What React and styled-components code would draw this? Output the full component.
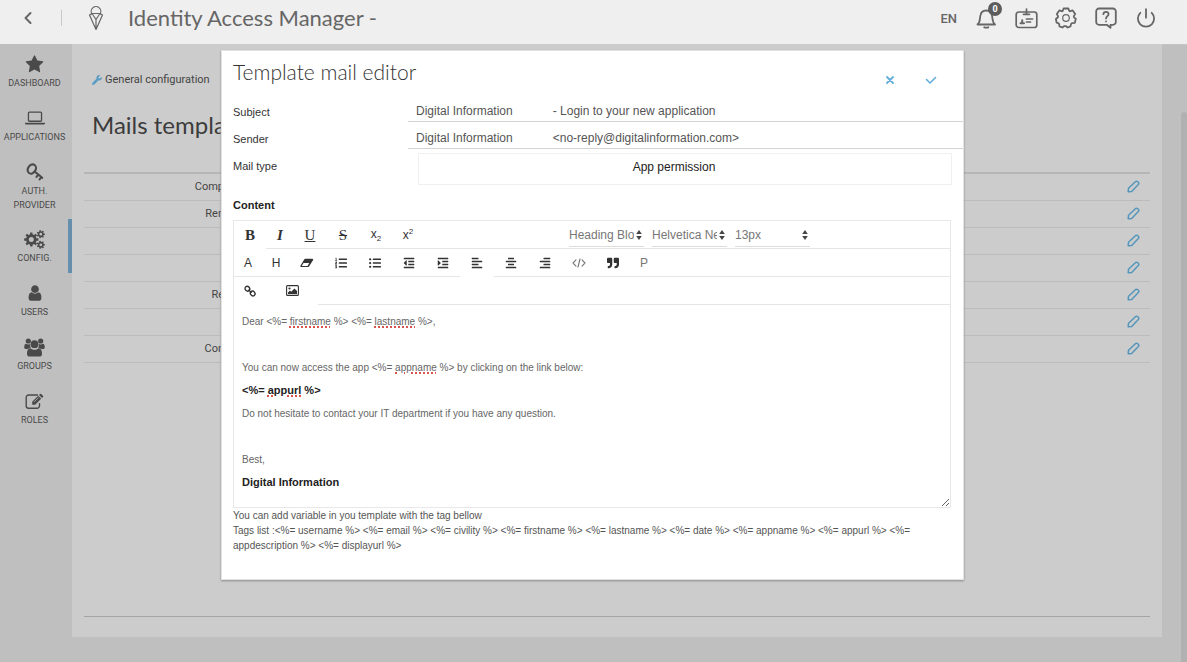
import React from "react";
import styled, { createGlobalStyle } from "styled-components";
import {
  FaListOl, FaListUl, FaOutdent, FaIndent, FaAlignLeft,
  FaAlignCenter, FaAlignRight, FaQuoteRight, FaWrench,
} from "react-icons/fa";

const sans = `"Liberation Sans", Arial, sans-serif`;
const roboto = `Roboto, "Liberation Sans", sans-serif`;
const display = `Lato, "Liberation Sans", sans-serif`;

const Global = createGlobalStyle`
  * { box-sizing: border-box; }
  body { margin: 0; background: #bfbfbf; font-family: ${roboto}; color: #444; }
  button, input, select { font: inherit; color: inherit; }
  button { border: 0; padding: 0; background: none; cursor: pointer; }
  svg { display: block; flex: none; }
`;

const Page = styled.div`
  min-height: 100vh;
  display: flex;
  flex-direction: column;
`;
const Header = styled.header`
  height: 44px;
  padding: 0 29px 8px 16px;
  background: #efefef;
  box-shadow: 0 1px 1px #c4c4c4;
  display: flex;
  align-items: center;
  color: #666;
`;
const IconButton = styled.button`
  position: relative;
  width: 24px;
  height: 28px;
  display: flex;
  align-items: center;
  justify-content: center;
`;
const Divider = styled.span`
  width: 1px;
  height: 16px;
  margin: 0 22px 0 21px;
  background: #c8c8c8;
`;
const AppTitle = styled.h1`
  margin: 0 auto 0 20px;
  font: 400 22px/28px ${display};
  color: #666;
`;
const Lang = styled.button`
  margin-right: 17px;
  font-size: 13px;
  font-weight: 500;
`;
const HeaderTools = styled.div`
  display: flex;
  gap: 16px;
`;
const Count = styled.span`
  position: absolute;
  top: -2px;
  right: -4px;
  width: 14px;
  height: 14px;
  border-radius: 50%;
  background: #5c5c5c;
  color: #fff;
  font: 700 9px/14px ${roboto};
  text-align: center;
`;

const Body = styled.div`
  position: relative;
  flex: 1;
  display: flex;
`;
const Sidebar = styled.nav`
  width: 72px;
  flex: none;
  background: #bfbfbf;
`;
const NavItem = styled.a`
  display: flex;
  flex-direction: column;
  align-items: center;
  min-height: 54px;
  padding: 8px 0 7px 1px;
  border-right: 4px solid ${(p) => (p.$active ? "#668fad" : "transparent")};
  color: #4a4a4a;
  text-decoration: none;
  text-align: center;
  font-size: 9px;
  line-height: 14px;
`;
const NavIcon = styled.span`
  height: 24px;
  display: flex;
  align-items: center;
`;
const Main = styled.main`
  flex: 1;
  margin: 0 25px 25px 0;
  padding: 28px 12px 20px;
  background: #ccc;
  display: flex;
  flex-direction: column;
`;
const Crumb = styled.a`
  display: flex;
  align-items: center;
  gap: 3px;
  padding-left: 8px;
  font-size: 11px;
  line-height: 16px;
  color: #444;
  text-decoration: none;
  svg { color: #5a9cc4; }
`;
const PageTitle = styled.h2`
  margin: 20px 0 30px 8px;
  white-space: nowrap;
  font: 400 24px/34px ${display};
  color: #3c3c3c;
`;
const MailTable = styled.table`
  width: 100%;
  border-collapse: collapse;
  border-top: 2px solid #b6b6b6;
  td { height: 27px; padding: 0; border-bottom: 1px solid #bcbcbc; }
`;
const NameCell = styled.td`
  width: 140px;
  text-align: right;
  font-size: 11px;
`;
const EditButton = styled.button`
  display: block;
  margin: 0 10px 0 auto;
  color: #5496bb;
`;
const PageRule = styled.hr`
  width: 100%;
  margin: auto 0 0;
  border: 0;
  border-top: 1px solid #a4a4a4;
`;
const ScrollThumb = styled.div`
  position: absolute;
  top: 68px;
  right: 0;
  bottom: 0;
  width: 6px;
  border-radius: 3px 3px 0 0;
  background: #b1b1b1;
`;

const Overlay = styled.div`
  position: absolute;
  inset: 0;
  padding-top: 6px;
  display: flex;
  justify-content: center;
  align-items: flex-start;
  pointer-events: none;
`;
const Modal = styled.section`
  width: 63%;
  max-width: 743px;
  margin-right: 2px;
  min-height: 530px;
  padding: 7px 0 22px 11px;
  background: #fff;
  border: 1px solid #e2e2e2;
  box-shadow: 0 1px 2px #8c8c8c;
  pointer-events: auto;
  font: 400 11px/16px ${sans};
  color: #444;
`;
const ModalHead = styled.div`
  display: flex;
  justify-content: space-between;
  height: 43px;
  padding-right: 26px;
`;
const ModalTitle = styled.h2`
  margin: 0;
  font: 300 21px/28px ${display};
  color: #333;
`;
const Actions = styled.div`
  display: flex;
  gap: 30px;
  padding-top: 8px;
  button { width: 12px; height: 28px; color: #62addb; }
`;
const Field = styled.div`
  display: grid;
  grid-template-columns: 175px 1fr;
  align-items: start;
  height: ${(p) => (p.$tall ? 34 : 27)}px;
  label { padding-top: 3px; color: #333; }
`;
const LineInput = styled.input`
  width: 100%;
  height: 21px;
  padding: 0 8px;
  border: 0;
  border-bottom: 1px solid #d4d4d4;
  background: none;
  outline: 0;
  font-size: 12px;
  color: #555;
`;
const TypeSelect = styled.select`
  appearance: none;
  height: 32px;
  margin: -2px 11px 0 10px;
  padding: 0 30px 5px 8px;
  border: 1px solid #f0f0f0;
  background: #fff;
  color: #222;
  font-size: 12px;
  text-align-last: center;
`;
const ContentLabel = styled.h3`
  margin: 8px 0 7px;
  font: 700 11px/16px ${sans};
  color: #222;
`;
const Editor = styled.div`
  margin-right: 12px;
  border: 1px solid #e8e8e8;
`;
const ToolRow = styled.div`
  display: flex;
  height: 28px;
`;
const Tool = styled.button`
  width: ${(p) => p.$w || 34}px;
  height: 28px;
  display: flex;
  align-items: center;
  justify-content: center;
  border-bottom: 1px solid ${(p) => (p.$plain ? "transparent" : "#e6e6e6")};
  color: ${(p) => (p.$soft ? "#777" : "#333")};
  font-family: ${(p) => (p.$serif ? `"Liberation Serif", serif` : sans)};
  font-size: ${(p) => (p.$serif ? 15 : 12)}px;
  sub, sup { font-size: 8px; line-height: 8px; }
`;
const ToolFill = styled.div`
  flex: 1;
  display: flex;
  gap: 8px;
  padding-left: ${(p) => p.$indent || 0}px;
  border-bottom: 1px solid #e6e6e6;
`;
const Picker = styled.span`
  position: relative;
  width: 75px;
  height: 26px;
  border-bottom: 1px solid #ddd;
  select {
    appearance: none;
    width: 65px;
    height: 26px;
    padding: 1px 0 0;
    border: 0;
    background: none;
    outline: 0;
    overflow: hidden;
    font-size: 12px;
    color: #777;
  }
  svg { position: absolute; right: 2px; top: 9px; }
`;
const Text = styled.div`
  height: 202px;
  padding: 5px 8px;
  overflow: hidden;
  resize: vertical;
  outline: 0;
  color: #666;
  font-size: 10px;
  line-height: 23px;
  p { margin: 0; min-height: 23px; }
  strong { color: #222; font-size: 11px; }
`;
const Misspelt = styled.span`
  text-decoration: underline dotted #d9534f 2px;
  text-underline-offset: 1px;
`;
const Help = styled.p`
  margin: 0 12px 0 0;
  padding-right: 30px;
  font-size: 10px;
  line-height: 15px;
  color: #555;
`;

const gear = (cx, cy, r, teeth, hole) => {
  const pts = [];
  for (let i = 0; i < teeth; i++) {
    const step = (Math.PI * 2) / teeth;
    [[-0.3, 0.74], [-0.2, 1], [0.2, 1], [0.3, 0.74]].forEach(([o, k]) => {
      const a = (i + o) * step;
      pts.push(`${(cx + Math.cos(a) * r * k).toFixed(2)} ${(cy + Math.sin(a) * r * k).toFixed(2)}`);
    });
  }
  return `M${pts.join("L")}ZM${cx - hole} ${cy}a${hole} ${hole} 0 1 0 ${hole * 2} 0a${hole} ${hole} 0 1 0 ${-hole * 2} 0Z`;
};

const Line = ({ w = 20, h = w, box = "0 0 20 20", sw = 1.5, children }) => (
  <svg width={w} height={h} viewBox={box} fill="none" stroke="currentColor"
    strokeWidth={sw} strokeLinecap="round" strokeLinejoin="round" aria-hidden="true">{children}</svg>
);
const Solid = ({ w = 20, h = w, box = "0 0 20 20", children }) => (
  <svg width={w} height={h} viewBox={box} fill="currentColor" fillRule="evenodd" aria-hidden="true">{children}</svg>
);

const Star = () => (
  <Solid w={19} box="0 0 1792 1792"><path d="M1728 647q0 22-26 48l-363 354 86 500q1 7 1 20 0 21-10.5 35.5t-30.5 14.5q-19 0-40-12l-449-236-449 236q-22 12-40 12-21 0-31.5-14.5t-10.5-35.5q0-6 2-20l86-500-364-354q-25-27-25-48 0-37 56-46l502-73 225-455q19-41 49-41t49 41l225 455 502 73q56 9 56 46z" /></Solid>
);
const Laptop = () => (
  <Solid w={20} h={14} box="0 0 20 14"><path d="M4.5 0.5h11a1.7 1.7 0 0 1 1.7 1.7v7a1.7 1.7 0 0 1-1.7 1.7h-11a1.7 1.7 0 0 1-1.7-1.7v-7A1.7 1.7 0 0 1 4.5 .5zM4.600 1.800a.5.5 0 0 0-.5.5v6.800a.5.5 0 0 0 .5.5h10.800a.5.5 0 0 0 .5-.5V2.300a.5.5 0 0 0-.5-.5zM0 11.800h20v.8c0 .6-.7 1-1.700 1H1.700c-1 0-1.700-.4-1.700-1z" /></Solid>
);
const Key = () => (
  <Line w={18} box="0 0 18 18" sw={2.1}><ellipse cx="5.800" cy="6" rx="3.800" ry="4.900" transform="rotate(35 5.800 6)" /><path d="M9 8.800l7.200 6M12.300 11.800l-1.800 2.100M15.400 14.200l-1.800 2.200" /></Line>
);
const Cogs = () => (
  <Solid w={21} h={19} box="0 0 21 19"><path d={gear(7.3, 9.5, 7.2, 8, 2.5)} /><path d={gear(16.8, 4.2, 4.1, 7, 1.4)} /><path d={gear(16.8, 14.8, 4.1, 7, 1.4)} /></Solid>
);
const User = () => (
  <Solid w={18} box="0 0 1792 1792"><path d="M1536 1399q0 109-62.500 187t-150.500 78h-854q-88 0-150.500-78t-62.500-187q0-85 8.500-160.500t31.500-152 58.500-131 94-89 134.500-34.500q131 128 313 128t313-128q76 0 134.500 34.500t94 89 58.500 131 31.500 152 8.500 160.500zm-256-887q0 159-112.500 271.500t-271.500 112.500-271.500-112.500-112.500-271.500 112.500-271.500 271.500-112.500 271.500 112.500 112.500 271.500z" /></Solid>
);
const Users = () => (
  <Solid w={21} h={19} box="0 0 21 19"><circle cx="4.300" cy="3" r="2.600" /><circle cx="16.700" cy="3" r="2.600" /><circle cx="10.500" cy="6.200" r="3.900" /><path d="M2.200 5.800c1.300 1 2.800 1 4 .3-.4 1.500 0 2.700.7 3.600-1.200 0-2.200.5-2.900 1.400H2C.8 11.100.2 10.400.2 9.300c0-1.800.6-3.500 2-3.500zM18.800 5.800c-1.300 1-2.800 1-4 .3.4 1.500 0 2.700-.7 3.600 1.200 0 2.200.5 2.900 1.400h2c1.200 0 1.800-.7 1.800-1.800 0-1.800-.6-3.500-2-3.500zM6.500 10.300c2.400 2 5.600 2 8 0 2.600 0 3.500 2.500 3.500 5.400 0 1.900-1 2.900-2.700 2.900H5.700c-1.700 0-2.700-1-2.700-2.900 0-2.900.9-5.400 3.500-5.400z" /></Solid>
);
const Roles = () => (
  <svg width="19" height="17" viewBox="0 0 19 17" fill="none" aria-hidden="true">
    <path d="M12.500 2H3.700A2.500 2.500 0 0 0 1.200 4.500v8.300a2.500 2.500 0 0 0 2.500 2.500H12a2.500 2.500 0 0 0 2.500-2.500v-2" stroke="currentColor" strokeWidth="1.400" strokeLinecap="round" />
    <path d="M7.200 8.800l6-6 3 3-6 6h-3zM14 2l1-1q.6-.6 1.200 0L18 2.800q.5.600 0 1.200l-1 1z" fill="currentColor" />
    <path d="M9 9l4.500-4.500" stroke="#bfbfbf" strokeWidth=".7" />
  </svg>
);
const Pencil = () => (
  <Line w={13} box="0 0 13 13" sw={1.5}><path d="M1.200 11.800l.3-3.500L8.400 1.700q1.200-1 2.300 0l.6.6q1 1.100 0 2.300L4.700 11.500z" /></Line>
);

const Bell = () => <Line w={21} h={22} box="0 0 21 22" sw={1.8}><path d="M1.500 17.500h17.500c-2.600-2-2.400-4.500-2.800-8-.4-3.800-2.200-6-6-6s-5.600 2.200-6 6c-.4 3.500-.1 6-2.700 8zM8.300 20.300q2 .8 4 0" /></Line>;
const Badge = () => <Line w={23} h={21} box="0 0 23 21" sw={1.7}><rect x="1.200" y="4" width="20.600" height="15.500" rx="2.500" /><path d="M11.500 1v5.500M8.500 6.300h6M11.500 11h6M11.500 14h4" /><path d="M5.500 15.300h3.500M7.200 12.200v2" strokeWidth="2" /></Line>;
const Settings = () => <Line w={22} box="0 0 22 22" sw={1.8}><path d="M8.600 1.500h4.800l.8 2.300q.4.600 1.100.4l2.400-.8 2.500 3.500-1.300 2.200q-.3 1 .3 1.500l1.600 1.200-1 4-2.700.3q-.8.100-1 .8l-.6 2.500-2.800 1.100-1.700-1.300h-2L7.300 20.500 4.500 19.400l-.4-2.500q-.2-.700-1-.8L1.600 15.600.9 12l1.800-1.500q.5-.6.2-1.500L1.800 6.900l2.500-3.500 2.400.8q.7.200 1.100-.4z" /><circle cx="11" cy="11" r="3.300" strokeWidth="1.200" /></Line>;
const HelpIcon = () => <Line w={22} box="0 0 22 22" sw={1.8}><path d="M4 1.500h14a2.800 2.800 0 0 1 2.800 2.800v10.700a2.800 2.800 0 0 1-2.800 2.800h-2.500V20.800l-3.800-3H4a2.800 2.800 0 0 1-2.800-2.800V4.300A2.800 2.800 0 0 1 4 1.500z" /><path d="M8.400 7.200c.2-3.400 5.400-3 5.200.1-.1 1.700-2.600 2-2.600 4.200M11 14.300v.1" /></Line>;
const Power = () => <Line w={20} box="0 0 20 20" sw={1.8}><path d="M10 1.200v8.500M4.300 4.800a8.100 8.100 0 1 0 11.400 0" /></Line>;

const SortArrows = () => <Solid w={6} h={10} box="0 0 6 10"><path d="M3 0l2.800 4H.2zM3 10L.2 6h5.600z" /></Solid>;
const LinkIcon = () => <Line w={12} box="0 0 12 12" sw={1.4}><ellipse cx="3.400" cy="3.700" rx="2.200" ry="2.500" transform="rotate(-40 3.400 3.700)" /><ellipse cx="8.700" cy="8.500" rx="2.200" ry="2.500" transform="rotate(-40 8.700 8.500)" /><path d="M4.800 5.200l2.400 2" /></Line>;
const Eraser = () => <Solid w={14} h={10} box="0 0 14 10"><path d="M5.300.8h7.200q1 .2.600 1.200L9.200 8.300q-.4.600-1.200.7H.9Q0 8.700.4 7.800L4.200 1.400q.4-.6 1.100-.6zM1.700 8h5.800L9.300 5.100H3.500z" /></Solid>;
const Code = () => <Line w={14} h={10} box="0 0 14 10" sw={1.1}><path d="M4 1.800L1 5l3 3.200M10 1.800L13 5l-3 3.200M8 1L6 9" /></Line>;
const Picture = () => <svg width="13" height="11" viewBox="0 0 13 11" aria-hidden="true"><rect x=".6" y=".6" width="11.800" height="9.800" rx="1" fill="none" stroke="#333" strokeWidth="1.100" /><circle cx="3.500" cy="3.500" r="1.100" fill="#333" /><path d="M2 9V7.500l2-2 1.200 1.200L8.500 3.500 11 6v3z" fill="#333" /></svg>;

const NAV = [
  ["DASHBOARD", Star], ["APPLICATIONS", Laptop], ["AUTH. PROVIDER", Key], ["CONFIG.", Cogs],
  ["USERS", User], ["GROUPS", Users], ["ROLES", Roles],
];
const ROWS = ["Comp", "Ren", "", "", "Re", "", "Con"];
const HEADER_TOOLS = [["Badge", Badge], ["Settings", Settings], ["Help", HelpIcon], ["Log out", Power]];
const BLOCKS = [
  ["Numbered list", FaListOl], ["Bulleted list", FaListUl], ["Outdent", FaOutdent], ["Indent", FaIndent],
  ["Align left", FaAlignLeft], ["Align center", FaAlignCenter], ["Align right", FaAlignRight],
  ["Code", Code], ["Quote", FaQuoteRight],
];
const gap = "\u00a0".repeat(12);

function Pick({ label, value }) {
  return (
    <Picker>
      <select aria-label={label}><option>{value}</option></select>
      <SortArrows />
    </Picker>
  );
}

export default function App() {
  return (
    <Page>
      <Global />
      <Header>
        <IconButton aria-label="Back"><Line w={12} h={14} box="0 0 12 14" sw={2}><path d="M8.500 2L3.500 7l5 5" /></Line></IconButton>
        <Divider />
        <Line w={24} h={26} box="0 0 24 26" sw={1.2}><path d="M8.200 9.300A4.800 4.800 0 1 1 15.800 9.300M8 8.500h8l2.500 1.500L12 24.500 5.500 10zM9 10l3 4.500L15 10M12 14.500V24" /></Line>
        <AppTitle>Identity Access Manager -</AppTitle>
        <Lang>EN</Lang>
        <HeaderTools>
          <IconButton aria-label="Notifications"><Bell /><Count>0</Count></IconButton>
          {HEADER_TOOLS.map(([name, Icon]) => <IconButton key={name} aria-label={name}><Icon /></IconButton>)}
        </HeaderTools>
      </Header>
      <Body>
        <Sidebar>
          {NAV.map(([name, Icon]) => (
            <NavItem key={name} href="#" $active={name === "CONFIG."}><NavIcon><Icon /></NavIcon>{name}</NavItem>
          ))}
        </Sidebar>
        <Main>
          <Crumb href="#"><FaWrench size={10} />General configuration</Crumb>
          <PageTitle>Mails templa</PageTitle>
          <MailTable>
            <tbody>
              {ROWS.map((name, i) => (
                <tr key={i}>
                  <NameCell>{name}</NameCell>
                  <td><EditButton aria-label="Edit"><Pencil /></EditButton></td>
                </tr>
              ))}
            </tbody>
          </MailTable>
          <PageRule />
        </Main>
        <ScrollThumb />
        <Overlay>
          <Modal role="dialog" aria-labelledby="editor-title">
            <ModalHead>
              <ModalTitle id="editor-title">Template mail editor</ModalTitle>
              <Actions>
                <button aria-label="Cancel"><Line w={12} h={10} box="0 0 12 10" sw={1.8}><path d="M4 2l6 6M10 2L4 8" /></Line></button>
                <button aria-label="Save"><Line w={12} h={10} box="0 0 12 10" sw={1.6}><path d="M1.500 4.500L5 8l5.500-5.500" /></Line></button>
              </Actions>
            </ModalHead>
            <Field><label htmlFor="subject">Subject</label><LineInput id="subject" defaultValue={`Digital Information${gap}- Login to your new application`} /></Field>
            <Field><label htmlFor="sender">Sender</label><LineInput id="sender" defaultValue={`Digital Information${gap}<no-reply@digitalinformation.com>`} /></Field>
            <Field $tall><label htmlFor="type">Mail type</label><TypeSelect id="type"><option>App permission</option></TypeSelect></Field>
            <ContentLabel>Content</ContentLabel>
            <Editor>
              <ToolRow>
                <Tool $w={32} $serif $plain><b>B</b></Tool>
                <Tool $w={28} $serif><b><i>I</i></b></Tool>
                <Tool $w={32} $serif><u>U</u></Tool>
                <Tool $w={34} $serif><s>S</s></Tool>
                <Tool $w={32}><span>x<sub>2</sub></span></Tool>
                <Tool $w={32}><span>x<sup>2</sup></span></Tool>
                <ToolFill $indent={145}>
                  <Pick label="Block style" value="Heading Block" />
                  <Pick label="Font" value="Helvetica Neue" />
                  <Pick label="Font size" value="13px" />
                </ToolFill>
              </ToolRow>
              <ToolRow>
                <Tool $w={28}>A</Tool>
                <Tool $w={28}>H</Tool>
                <Tool aria-label="Clear formatting"><Eraser /></Tool>
                {BLOCKS.map(([name, Icon]) => (
                  <Tool key={name} aria-label={name} $plain={name === "Align left"} $soft={name === "Code"}><Icon size={12} /></Tool>
                ))}
                <Tool $w={28} $soft>P</Tool>
                <ToolFill />
              </ToolRow>
              <ToolRow>
                <Tool $w={32} $plain aria-label="Link"><LinkIcon /></Tool>
                <Tool $w={52} $plain aria-label="Image"><Picture /></Tool>
                <ToolFill />
              </ToolRow>
              <Text contentEditable suppressContentEditableWarning spellCheck={false} role="textbox" aria-label="Content">
                <p>Dear &lt;%= <Misspelt>firstname</Misspelt> %&gt; &lt;%= <Misspelt>lastname</Misspelt> %&gt;,</p>
                <p />
                <p>You can now access the app &lt;%= <Misspelt>appname</Misspelt> %&gt; by clicking on the link below:</p>
                <p><strong>&lt;%= <Misspelt>appurl</Misspelt> %&gt;</strong></p>
                <p>Do not hesitate to contact your IT department if you have any question.</p>
                <p />
                <p>Best,</p>
                <p><strong>Digital Information</strong></p>
              </Text>
            </Editor>
            <Help>
              You can add variable in you template with the tag bellow<br />
              Tags list :&lt;%= username %&gt; &lt;%= email %&gt; &lt;%= civility %&gt; &lt;%= firstname %&gt; &lt;%= lastname %&gt; &lt;%= date %&gt; &lt;%= appname %&gt; &lt;%= appurl %&gt; &lt;%= appdescription %&gt; &lt;%= displayurl %&gt;
            </Help>
          </Modal>
        </Overlay>
      </Body>
    </Page>
  );
}
